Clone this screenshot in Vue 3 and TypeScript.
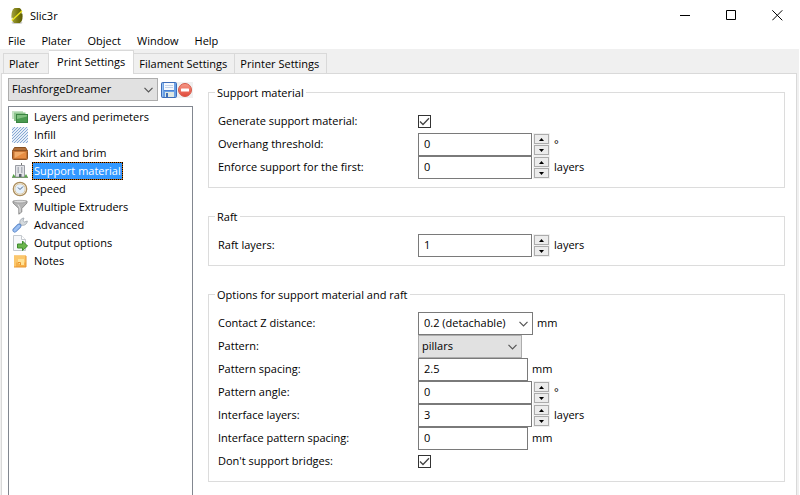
<script setup lang="ts">
import { reactive, ref } from 'vue'

type Kind = 'check' | 'spin' | 'text' | 'combo' | 'select'

interface Field {
  id: string
  label: string
  kind: Kind
  value: string
  checked?: boolean
  unit?: string
  options?: string[]
}

interface Group {
  title: string
  fields: Field[]
}

const menus = ['File', 'Plater', 'Object', 'Window', 'Help']
const tabs = ['Plater', 'Print Settings', 'Filament Settings', 'Printer Settings']
const activeTab = ref('Print Settings')
const preset = ref('FlashforgeDreamer')

const pages = [
  'Layers and perimeters',
  'Infill',
  'Skirt and brim',
  'Support material',
  'Speed',
  'Multiple Extruders',
  'Advanced',
  'Output options',
  'Notes',
]
const activePage = ref('Support material')

const groups = reactive<Group[]>([
  {
    title: 'Support material',
    fields: [
      { id: 'generate', label: 'Generate support material:', kind: 'check', value: '', checked: true },
      { id: 'overhang', label: 'Overhang threshold:', kind: 'spin', value: '0', unit: '°' },
      { id: 'enforce', label: 'Enforce support for the first:', kind: 'spin', value: '0', unit: 'layers' },
    ],
  },
  {
    title: 'Raft',
    fields: [{ id: 'raft', label: 'Raft layers:', kind: 'spin', value: '1', unit: 'layers' }],
  },
  {
    title: 'Options for support material and raft',
    fields: [
      { id: 'contact', label: 'Contact Z distance:', kind: 'combo', value: '0.2 (detachable)', unit: 'mm', options: ['0.2 (detachable)'] },
      { id: 'pattern', label: 'Pattern:', kind: 'select', value: 'pillars', options: ['pillars'] },
      { id: 'spacing', label: 'Pattern spacing:', kind: 'text', value: '2.5', unit: 'mm' },
      { id: 'angle', label: 'Pattern angle:', kind: 'spin', value: '0', unit: '°' },
      { id: 'interface', label: 'Interface layers:', kind: 'spin', value: '3', unit: 'layers' },
      { id: 'ispacing', label: 'Interface pattern spacing:', kind: 'text', value: '0', unit: 'mm' },
      { id: 'bridges', label: "Don't support bridges:", kind: 'check', value: '', checked: true },
    ],
  },
])

function step(field: Field, by: number) {
  field.value = String(Math.max(0, Number(field.value) + by))
}
</script>

<template>
  <div class="window">
    <header class="titlebar">
      <svg class="logo" viewBox="0 0 14 16" aria-hidden="true">
        <defs>
          <linearGradient id="egg" x1="0" y1="0" x2="1" y2="0">
            <stop offset="0" stop-color="#a3a343" />
            <stop offset=".5" stop-color="#7d7d12" />
            <stop offset="1" stop-color="#5a5a04" />
          </linearGradient>
        </defs>
        <ellipse cx="7" cy="14.800" rx="5.500" ry="1.200" fill="#cfcfcf" />
        <path d="M4.500 0h5C11.500 1 12.600 4 12.600 8S11.500 14 9.800 15H4.200C2.300 14 1.400 11.500 1.400 8S2.500 1 4.500 0z" fill="url(#egg)" />
        <path d="M1 10.800 2.600 9.400 2.800 11.600 1.600 12.600zM11.300 3.500 13 2v3.500l-1.200.5z" fill="#fff" />
        <path d="M1.800 12.400 12 3" stroke="#f2ea1c" stroke-width="1.300" />
      </svg>
      <span class="app-name">Slic3r</span>
      <div class="window-buttons">
        <button type="button" aria-label="Minimize"><svg viewBox="0 0 11 11"><path d="M0 5.500h10" /></svg></button>
        <button type="button" aria-label="Maximize"><svg viewBox="0 0 11 11"><path d="M.5.5h9v9h-9z" /></svg></button>
        <button type="button" aria-label="Close"><svg viewBox="0 0 11 11"><path d="M.3.3l10 10M10.300.3l-10 10" /></svg></button>
      </div>
    </header>

    <nav class="menubar">
      <button v-for="m in menus" :key="m" type="button">{{ m }}</button>
    </nav>

    <div class="tabs" role="tablist">
      <button
        v-for="t in tabs"
        :key="t"
        type="button"
        role="tab"
        class="tab"
        :class="{ active: t === activeTab }"
        :aria-selected="t === activeTab"
        @click="activeTab = t"
      >
        {{ t }}
      </button>
    </div>

    <div class="frame">
      <div class="panel">
        <aside class="sidebar">
          <div class="preset">
            <span class="select-box gray preset-select">
              <select v-model="preset" aria-label="Preset">
                <option>FlashforgeDreamer</option>
              </select>
              <svg class="chevron" viewBox="0 0 9 6"><path d="M.5.800 4.500 4.800 8.500.8" /></svg>
            </span>
            <button type="button" class="tool" aria-label="Save preset">
              <svg viewBox="0 0 16 16">
                <rect x=".5" y=".5" width="15" height="15" rx="1" fill="#6a9fe4" stroke="#3d6cb8" />
                <path d="M1.500 1.500v13" stroke="#9cc4f2" />
                <rect x="3" y="1" width="10" height="7" fill="#f4f8fd" />
                <path d="M4 3.500h8M4 5.500h8" stroke="#c3d2e8" />
                <rect x="4" y="10" width="9" height="5" fill="#dfe8e2" />
                <rect x="5" y="11" width="2" height="4" fill="#3f6fb8" />
                <path d="M3 8.500h10" stroke="#4a82d2" />
              </svg>
            </button>
            <button type="button" class="tool" aria-label="Delete preset">
              <svg viewBox="0 0 16 16">
                <defs>
                  <linearGradient id="red" x1="0" y1="0" x2="0" y2="1">
                    <stop offset="0" stop-color="#f79a88" />
                    <stop offset="1" stop-color="#e0483a" />
                  </linearGradient>
                </defs>
                <rect width="16" height="16" fill="#f0f0f0" />
                <circle cx="8" cy="8" r="6.500" fill="url(#red)" stroke="#d65a4a" />
                <rect x="4" y="6.500" width="8" height="3" rx=".5" fill="#fff" />
              </svg>
            </button>
          </div>

          <ul class="pages">
            <li v-for="(p, i) in pages" :key="p">
              <button type="button" :class="{ selected: p === activePage }" @click="activePage = p">
                <svg class="page-icon" viewBox="0 0 16 16" aria-hidden="true">
                  <template v-if="i === 0">
                    <rect x="0" y="2" width="11" height="8" fill="#c4e2c4" />
                    <rect x="2" y="3.500" width="11.500" height="8.500" fill="#8cc48c" />
                    <rect x="4.500" y="5.500" width="11" height="8" fill="#4a9a50" stroke="#3a8442" />
                    <path d="M5 10V6h10v1.500z" fill="#7fbf7f" />
                  </template>
                  <template v-else-if="i === 1">
                    <rect width="16" height="16" fill="#e6eef8" />
                    <path
                      d="M0 3 3 0M0 6 6 0M0 9 9 0M0 12 12 0M0 15 15 0M2 16 16 2M5 16 16 5M8 16 16 8M11 16 16 11M14 16l2-2"
                      stroke="#86a8d4"
                    />
                  </template>
                  <template v-else-if="i === 2">
                    <path d="M2.500 2.500h11l2 3.500H.5z" fill="#b0703a" stroke="#875022" />
                    <rect x=".5" y="5.500" width="15" height="9" rx="1" fill="#c47232" stroke="#8f5222" />
                    <rect x="2.500" y="7" width="11" height="6" fill="#f2ab68" />
                    <path d="M2.500 13 13.500 7v6z" fill="#e88d42" />
                  </template>
                  <template v-else-if="i === 3">
                    <path d="M9.500 0v3" stroke="#777" />
                    <path d="M3.500 2.500h9V14h-9z" fill="#e2e3e7" stroke="#9a9da4" />
                    <path d="M5.500 5H7M9 5h1.500M5.500 7H7M9 7h1.500M5.500 9H7M9 9h1.500" stroke="#7c8390" />
                    <rect x="7" y="11" width="2.500" height="3" fill="#59606c" />
                    <path d="M0 14.500 1.500 11 4 14.500zM12 14.500l2-3.500 2 3.500z" fill="#58a548" />
                    <path d="M0 14.500h16" stroke="#7a9a72" />
                  </template>
                  <template v-else-if="i === 4">
                    <circle cx="8" cy="8" r="6.700" fill="#fff" stroke="#ab8d5c" stroke-width="1.300" />
                    <circle cx="8" cy="8" r="5.200" fill="#e5f0fb" stroke="#dcc9a2" />
                    <path d="M8 8.500 11 5.500M8 8.500 6 6.500" fill="none" stroke="#496386" />
                  </template>
                  <template v-else-if="i === 5">
                    <path d="M1 2h14v2L9.800 9.500V13L6.800 15.200V9.500L1 4z" fill="#b4b4b4" stroke="#808080" stroke-width=".8" />
                    <ellipse cx="8" cy="2.600" rx="6.600" ry="1.300" fill="#ddd" stroke="#909090" stroke-width=".6" />
                    <path d="M6 5.500 8 9v4.500" fill="none" stroke="#e6e6e6" />
                  </template>
                  <template v-else-if="i === 6">
                    <path d="M10 6 6 10" stroke="#a4abb2" stroke-width="3" />
                    <path
                      d="M8 6.800c-.8-3 1-5.500 4-5.800L11 3.600l1.500 1.400 2.800-1c-.2 3-2.800 4.800-5.600 4.200z"
                      fill="#d5dade"
                      stroke="#9aa2aa"
                      stroke-width=".8"
                    />
                    <path d="M2.800 13.200 7 9" stroke="#5a86c8" stroke-width="4.600" stroke-linecap="round" />
                    <path d="M2.800 13.200 7 9" stroke="#9cc0f2" stroke-width="3" stroke-linecap="round" />
                  </template>
                  <template v-else-if="i === 7">
                    <path d="M1.500.5h8l4 4v11h-12z" fill="#f7f8fa" stroke="#c4c9ce" />
                    <path d="M9.500.5v4h4" fill="#fff" stroke="#c4c9ce" />
                    <path d="M5.500 9h5V6l5 5-5 4.500V13h-5z" fill="#6bb54c" stroke="#3f8c2e" />
                  </template>
                  <template v-else>
                    <rect x="2" y="2.500" width="12" height="11.500" fill="#f5b04a" />
                    <path d="M2 2.500h12v7H4v4.500H2z" fill="#fbc76c" />
                    <path d="M6 6h6v6H8.500L6 9.500z" fill="#ffe296" />
                    <path d="M6 9.500h2.500V12M2 14h12V3" fill="none" stroke="#e8952e" />
                  </template>
                </svg>
                <span class="page-name">{{ p }}</span>
              </button>
            </li>
          </ul>
        </aside>

        <main class="options">
          <fieldset v-for="g in groups" :key="g.title">
            <legend>{{ g.title }}</legend>
            <div v-for="f in g.fields" :key="f.id" class="row">
              <label :for="f.id">{{ f.label }}</label>
              <div class="control">
                <span v-if="f.kind === 'check'" class="check">
                  <input :id="f.id" v-model="f.checked" type="checkbox" />
                  <svg v-if="f.checked" viewBox="0 0 13 13"><path d="M2 6.500 5 9.500 11 3.300" /></svg>
                </span>
                <template v-else-if="f.kind === 'spin'">
                  <input :id="f.id" v-model="f.value" type="text" class="spin-input" />
                  <span class="spin">
                    <button type="button" aria-label="Increase" @click="step(f, 1)">
                      <svg viewBox="0 0 5 3"><path d="M0 3 2.500 0 5 3z" /></svg>
                    </button>
                    <button type="button" aria-label="Decrease" @click="step(f, -1)">
                      <svg viewBox="0 0 5 3"><path d="M0 0 2.500 3 5 0z" /></svg>
                    </button>
                  </span>
                </template>
                <input v-else-if="f.kind === 'text'" :id="f.id" v-model="f.value" type="text" class="text-input" />
                <span v-else class="select-box" :class="f.kind === 'select' ? 'gray short' : 'combo'">
                  <select :id="f.id" v-model="f.value">
                    <option v-for="o in f.options" :key="o">{{ o }}</option>
                  </select>
                  <svg class="chevron" viewBox="0 0 9 6"><path d="M.5.800 4.500 4.800 8.500.8" /></svg>
                </span>
                <span v-if="f.unit" class="unit">{{ f.unit }}</span>
              </div>
            </div>
          </fieldset>
        </main>
      </div>
    </div>
  </div>
</template>

<style>
body {
  margin: 0;
  background: #fff;
}
</style>

<style scoped>
.window,
.window * {
  box-sizing: border-box;
}
.window {
  display: flex;
  flex-direction: column;
  min-height: 100vh;
  color: #000;
  font: 11px/17px 'Open Sans', 'Noto Sans', sans-serif;
}
button,
input,
select {
  margin: 0;
  padding: 0;
  border: 0;
  border-radius: 0;
  background: none;
  color: inherit;
  font: inherit;
}
svg {
  display: block;
}
.titlebar {
  display: flex;
  align-items: center;
  height: 31px;
  padding: 0 0 0 10px;
}
.logo {
  width: 14px;
  height: 16px;
}
.app-name {
  margin-left: 6px;
}
.window-buttons {
  display: flex;
  margin-left: auto;
}
.window-buttons button {
  display: grid;
  place-items: center;
  width: 46px;
  height: 31px;
}
.window-buttons svg {
  width: 11px;
  height: 11px;
  fill: none;
  stroke: #000;
}
.menubar {
  display: flex;
  gap: 16px;
  height: 18px;
  padding-left: 8px;
}
.menubar button {
  height: 18px;
}
.tabs {
  display: flex;
  align-items: flex-end;
  height: 24px;
  margin-right: 1px;
  padding-left: 3px;
  background: #f0f0f0;
}
.tab {
  height: 20px;
  padding: 0 7px 0 5px;
  border: 1px solid #d9d9d9;
  border-bottom: 0;
  border-left: 0;
  white-space: nowrap;
}
.tab:first-child {
  padding-right: 9px;
  border-left: 1px solid #d9d9d9;
}
.tab.active {
  z-index: 1;
  height: 24px;
  margin-bottom: -1px;
  padding: 0 8px 3px;
  background: #fff;
}
.frame {
  display: flex;
  flex: 1;
  margin-right: 1px;
  padding: 0 2px 0 1px;
  background: #f0f0f0;
}
.panel {
  display: flex;
  flex: 1;
  gap: 15px;
  padding: 4px 11px 0 6px;
  border: solid #d9d9d9;
  border-width: 1px 1px 0;
  background: #fff;
}
.sidebar {
  display: flex;
  flex-direction: column;
  gap: 5px;
  width: 185px;
}
.preset {
  display: flex;
  align-items: center;
}
.preset-select {
  flex: 1;
  margin-right: 3px;
}
.tool {
  width: 16px;
  height: 16px;
}
.tool svg {
  width: 16px;
  height: 16px;
}
.select-box {
  display: grid;
  align-items: center;
  height: 23px;
  border: 1px solid #7a7a7a;
  background: #fff;
}
.select-box.gray {
  border-color: #adadad;
  background: #e1e1e1;
}
.select-box > * {
  grid-area: 1 / 1;
}
.select-box select {
  width: 100%;
  height: 21px;
  padding: 0 0 2px 5px;
  appearance: none;
}
.select-box.gray select {
  padding-left: 3px;
}
.chevron {
  justify-self: end;
  width: 9px;
  height: 6px;
  margin-right: 4px;
  fill: none;
  stroke: #555;
  stroke-width: 1.2;
  pointer-events: none;
}
.combo {
  width: 115px;
}
.short {
  width: 104px;
}
.pages {
  flex: 1;
  margin: 0;
  padding: 1px 3px;
  border: solid #828790;
  border-width: 1px 1px 0;
  list-style: none;
}
.pages button {
  display: flex;
  align-items: center;
  gap: 4px;
  height: 18px;
}
.page-icon {
  width: 16px;
  height: 16px;
}
.page-name {
  height: 18px;
  padding: 0 1px;
  border: 1px solid transparent;
  line-height: 16px;
  white-space: nowrap;
}
.selected .page-name {
  border: 1px dotted #000;
  background:
    linear-gradient(#3399ff, #3399ff) padding-box,
    linear-gradient(#cc6600, #cc6600) border-box;
  color: #fff;
}
.options {
  display: flex;
  flex: 1;
  flex-direction: column;
  gap: 20px;
  padding-top: 6px;
}
fieldset {
  min-width: 0;
  margin: 0;
  padding: 9px 9px 8px;
  border: 1px solid #dcdcdc;
}
legend {
  height: 17px;
  margin-left: -3px;
  padding: 0 2px;
}
.row {
  display: grid;
  grid-template-columns: 200px 1fr;
  align-items: center;
  height: 23px;
}
.row label,
.unit {
  padding-bottom: 2px;
}
.control {
  display: flex;
  align-items: center;
}
.control input[type='text'] {
  height: 23px;
  padding: 0 0 2px 5px;
  border: 1px solid #7a7a7a;
  background: #fff;
}
.control .spin-input {
  width: 114px;
}
.control .text-input {
  width: 110px;
}
.spin {
  display: grid;
  gap: 1px;
  margin-left: 1px;
  padding: 1px;
  background: #f0f0f0;
}
.spin button {
  display: grid;
  place-items: center;
  width: 15px;
  height: 10px;
  border: 1px solid #acacac;
  background: #ececec;
}
.spin svg {
  width: 5px;
  height: 3px;
}
.unit {
  margin-left: 4px;
}
.check {
  display: grid;
}
.check > * {
  grid-area: 1 / 1;
  width: 13px;
  height: 13px;
}
.check input {
  border: 1px solid #333;
  background: #fff;
  appearance: none;
}
.check svg {
  fill: none;
  stroke: #444;
  stroke-width: 1.3;
  pointer-events: none;
}
</style>
